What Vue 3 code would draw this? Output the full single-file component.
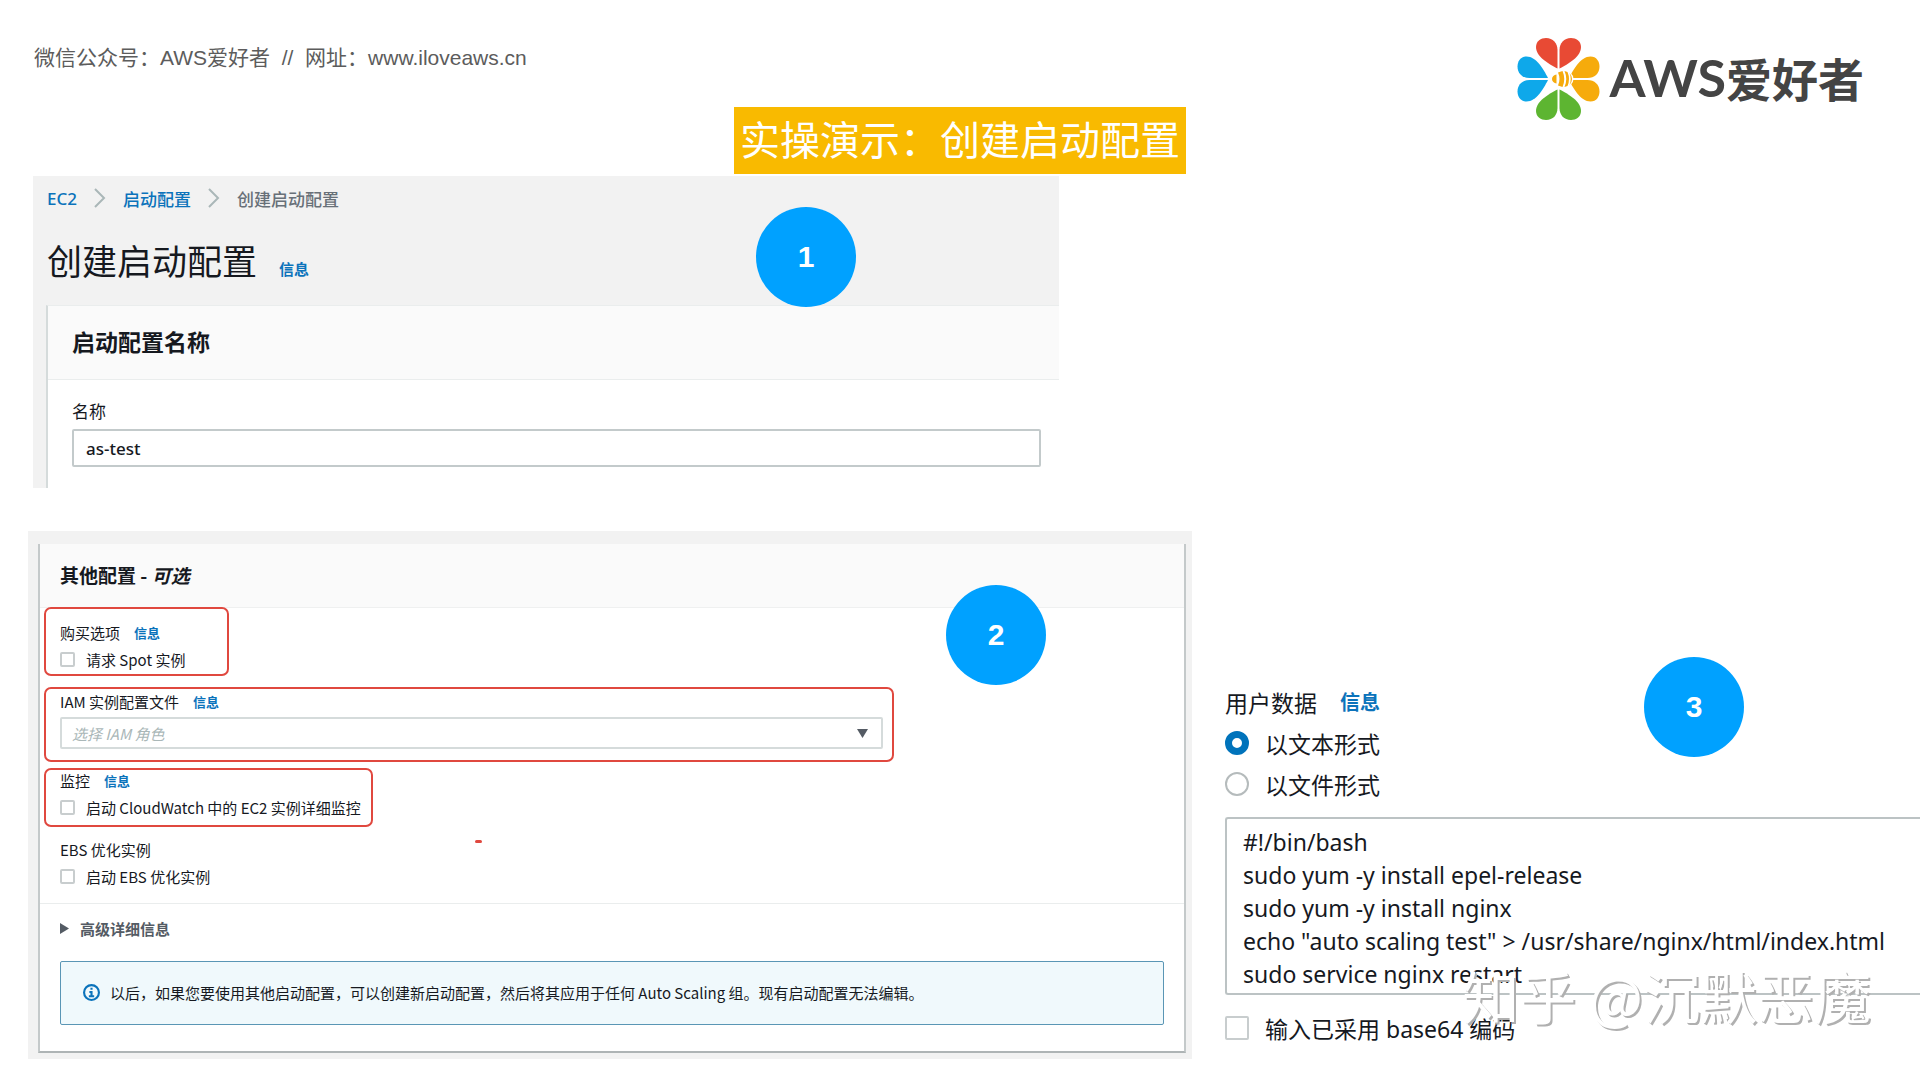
<script setup>
import { ref } from 'vue'

const name = ref('as-test')
const role = ref('')
const dataFormat = ref('text')
const base64 = ref(false)
const spot = ref(false)
const monitoring = ref(false)
const ebs = ref(false)
const script = ref(`#!/bin/bash
sudo yum -y install epel-release
sudo yum -y install nginx
echo "auto scaling test" > /usr/share/nginx/html/index.html
sudo service nginx restart`)
</script>

<template>
  <div class="slide">
    <header class="top">
      <p class="source">微信公众号：AWS爱好者&nbsp; //&nbsp; 网址：www.iloveaws.cn</p>
      <h1 class="title">实操演示：创建启动配置</h1>
      <div class="brand">
        <svg class="flower" viewBox="14 7 84 84" aria-hidden="true">
          <defs>
            <g id="petals">
              <path d="M54.5 38.5C46 34 33 27 33 17C33 11 38 8 43 8C50 8 54.5 13 54.5 20Z" />
              <path d="M56.5 38.5C65 34 78 27 78 17C78 11 73 8 68 8C61 8 56.5 13 56.5 20Z" />
            </g>
          </defs>
          <use href="#petals" fill="#e84a34" />
          <use href="#petals" fill="#f6ab0c" transform="rotate(90 55.5 49)" />
          <use href="#petals" fill="#5db531" transform="rotate(180 55.5 49)" />
          <use href="#petals" fill="#0ea8ea" transform="rotate(270 55.5 49)" />
          <ellipse cx="60.500" cy="49" rx="10" ry="9" fill="#fff" />
          <g fill="#f6ab0c">
            <path d="M53.500 44.500V53.500C51 53 49 51.500 49 49S51 45 53.500 44.500Z" />
            <path d="M55 42.500L59.500 41Q63 49 59.500 57L55 55.500Q58 49 55 42.500Z" />
            <path d="M61.500 41L64.500 42Q67.500 49 64.500 56L61.500 57Q65 49 61.500 41Z" />
            <path d="M66.500 43Q71.500 49 66.500 55Q69 49 66.500 43Z" />
          </g>
        </svg>
        <span class="wordmark"><span class="latin">AWS</span>爱好者</span>
      </div>
    </header>

    <main class="body">
      <div class="left">
        <section class="shot naming">
          <nav class="crumbs" aria-label="breadcrumb">
            <a href="#">EC2</a>
            <svg viewBox="0 0 12 20" aria-hidden="true"><path d="M1 1L10 10L1 19" /></svg>
            <a href="#">启动配置</a>
            <svg viewBox="0 0 12 20" aria-hidden="true"><path d="M1 1L10 10L1 19" /></svg>
            <span>创建启动配置</span>
          </nav>
          <div class="page-title">
            <h2>创建启动配置</h2>
            <a href="#" class="info">信息</a>
          </div>
          <div class="name-card">
            <h3>启动配置名称</h3>
            <div class="name-field">
              <label for="config-name">名称</label>
              <input id="config-name" v-model="name" type="text" />
            </div>
          </div>
          <span class="step one">1</span>
        </section>

        <section class="shot options">
          <div class="card">
            <h3>其他配置 - <em>可选</em></h3>
            <div class="groups">
              <div class="group marked purchase">
                <div class="row">购买选项 <a href="#" class="info">信息</a></div>
                <label class="row"><input v-model="spot" type="checkbox" />请求 Spot 实例</label>
              </div>
              <div class="group marked iam">
                <div class="row"><label for="iam-role">IAM 实例配置文件</label> <a href="#" class="info">信息</a></div>
                <div class="select">
                  <select id="iam-role" v-model="role">
                    <option value="">选择 IAM 角色</option>
                  </select>
                  <svg viewBox="0 0 11 9" aria-hidden="true"><path d="M0 0H11L5.500 9Z" /></svg>
                </div>
              </div>
              <div class="group marked monitor">
                <div class="row">监控 <a href="#" class="info">信息</a></div>
                <label class="row"><input v-model="monitoring" type="checkbox" />启动 CloudWatch 中的 EC2 实例详细监控</label>
              </div>
              <div class="group">
                <div class="row">EBS 优化实例</div>
                <label class="row"><input v-model="ebs" type="checkbox" />启动 EBS 优化实例</label>
              </div>
              <span class="dash"></span>
            </div>
            <div class="more">
              <button type="button" class="row advanced">
                <svg viewBox="0 0 9 11" aria-hidden="true"><path d="M0 0L9 5.500L0 11Z" /></svg>
                高级详细信息
              </button>
              <p class="notice">
                <svg viewBox="0 0 16 16" aria-hidden="true">
                  <circle cx="8" cy="8" r="7" />
                  <path d="M8 3.500V5.500M6 7.500H8V11.500M5.500 11.500H10.500" />
                </svg>
                以后，如果您要使用其他启动配置，可以创建新启动配置，然后将其应用于任何 Auto Scaling 组。现有启动配置无法编辑。
              </p>
            </div>
          </div>
          <span class="step two">2</span>
        </section>
      </div>

      <section class="userdata">
        <div class="line">用户数据 <a href="#" class="info">信息</a></div>
        <label class="line option"><input v-model="dataFormat" type="radio" name="format" value="text" />以文本形式</label>
        <label class="line option"><input v-model="dataFormat" type="radio" name="format" value="file" />以文件形式</label>
        <textarea v-model="script" rows="5" wrap="off" spellcheck="false" aria-label="用户数据"></textarea>
        <label class="line option"><input v-model="base64" type="checkbox" />输入已采用 base64 编码</label>
        <span class="step three">3</span>
        <span class="watermark">知乎 @沉默恶魔</span>
      </section>
    </main>
  </div>
</template>

<style>
body {
  margin: 0;
  background: #fff;
}
</style>

<style scoped>
.slide {
  overflow: hidden;
  padding-bottom: 20px;
  color: #16191f;
  font-family: "Noto Sans", "Noto Sans CJK SC", sans-serif;
}
.slide *,
.slide *::before {
  box-sizing: border-box;
}
h1, h2, h3, p {
  margin: 0;
}
a {
  color: #0b73bb;
  text-decoration: none;
}

/* top bar */
.top {
  display: grid;
  grid-template-columns: 1fr auto 1fr;
  height: 174px;
  padding: 0 56px 0 34px;
}
.source {
  padding-top: 43px;
  color: #5c5c5c;
  font: 21px/30px "Liberation Sans", "Noto Sans CJK SC", sans-serif;
  white-space: nowrap;
}
.title {
  align-self: end;
  height: 67px;
  margin-left: 22px;
  padding: 0 6px;
  background: #f9ba00;
  color: #fff;
  font: 400 40px/62px "Noto Sans CJK SC", sans-serif;
  white-space: nowrap;
}
.brand {
  display: flex;
  justify-content: flex-end;
  gap: 9px;
  padding-top: 37px;
}
.flower {
  width: 84px;
  height: 84px;
}
.wordmark {
  color: #444;
  font: 700 46px/80px "Noto Sans CJK SC", sans-serif;
  white-space: nowrap;
}
.latin {
  font: 700 52px/80px Lato, sans-serif;
}

/* layout */
.body {
  display: grid;
  grid-template-columns: 1192fr 728fr;
  padding-top: 2px;
}
.left {
  padding-left: 28px;
}
.shot {
  position: relative;
  background: #f2f2f2;
}
.info {
  font-weight: 700;
}
.step {
  position: absolute;
  width: 100px;
  height: 100px;
  border-radius: 50%;
  background: #00a1ff;
  color: #fff;
  font: 700 30px/100px "Liberation Sans", sans-serif;
  text-align: center;
}

/* name panel */
.naming {
  margin: 0 133px 0 5px;
  padding: 8px 0 0 14px;
}
.crumbs {
  display: flex;
  align-items: center;
  gap: 17px;
  height: 28px;
  color: #687078;
  font-size: 17px;
  font-weight: 500;
}
.crumbs svg {
  width: 12px;
  height: 20px;
  fill: none;
  stroke: #aab7b8;
  stroke-width: 2;
}
.page-title {
  display: flex;
  align-items: baseline;
  gap: 22px;
  height: 93px;
}
.page-title h2 {
  font: 400 35px/96px "Noto Sans CJK SC", sans-serif;
}
.page-title .info {
  font-size: 15px;
}
.name-card {
  border-top: 1px solid #eaeded;
  border-left: 2px solid #d5dbdb;
  margin-left: -1px;
  background: #fff;
}
.name-card h3 {
  height: 74px;
  padding-left: 24px;
  border-bottom: 1px solid #eaeded;
  background: #fafafa;
  font: 700 23px/70px "Noto Sans CJK SC", sans-serif;
}
.name-field {
  padding: 18px 18px 21px 24px;
}
.name-field label {
  display: block;
  height: 31px;
  font-size: 17px;
  line-height: 27px;
}
.name-field input {
  display: block;
  width: 100%;
  height: 38px;
  padding: 0 12px;
  border: 2px solid #c3cacb;
  border-radius: 2px;
  color: #16191f;
  font: 500 17px "Noto Sans", sans-serif;
}
.one {
  top: 31px;
  right: 203px;
}

/* options panel */
.options {
  margin-top: 43px;
  padding: 13px 6px 6px 10px;
}
.card {
  border: 1px solid #c4c9ca;
  border-width: 0 2px 2px;
  border-bottom-color: #aeb4b5;
  background: #fff;
  font: 400 15px "Noto Sans CJK SC", sans-serif;
}
.card h3 {
  height: 64px;
  padding-left: 20px;
  border-bottom: 1px solid #eff0f0;
  background: #fafafa;
  font: 700 19px/62px "Noto Sans CJK SC", sans-serif;
}
.groups {
  position: relative;
  display: flex;
  flex-direction: column;
  gap: 15px;
  padding: 11px 20px 13px;
  border-bottom: 1px solid #eaeded;
}
.row {
  display: flex;
  align-items: center;
  height: 27px;
  white-space: nowrap;
}
.row .info {
  margin-left: 14px;
  font-size: 13px;
}
.group {
  position: relative;
}
input[type="checkbox"],
input[type="radio"] {
  appearance: none;
  flex: none;
  width: 15px;
  height: 15px;
  margin: 0 11px 0 0;
  border: 2px solid #c8cdce;
  border-radius: 2px;
  background: #fff;
}
/* red annotation outline drawn over a group */
.marked::before {
  content: "";
  position: absolute;
  inset: -1px auto -3px -16px;
  border: 2px solid #e0483f;
  border-radius: 7px;
  pointer-events: none;
}
.purchase::before {
  top: -12px;
  width: 185px;
}
.iam {
  padding-bottom: 3px;
}
.iam::before {
  bottom: -10px;
  width: 850px;
}
.monitor::before {
  top: 1px;
  bottom: -6px;
  width: 329px;
}
.select {
  position: relative;
  width: 823px;
  max-width: 100%;
  margin-top: 2px;
}
.select select {
  display: block;
  appearance: none;
  width: 100%;
  height: 32px;
  padding: 0 10px;
  border: 2px solid #d5dbdb;
  border-radius: 2px;
  background: #fff;
  color: #aab7b8;
  font: italic 15px "Noto Sans CJK SC", sans-serif;
}
.select svg {
  position: absolute;
  top: 12px;
  right: 15px;
  width: 11px;
  height: 9px;
  fill: #545b64;
}
.dash {
  position: absolute;
  left: 435px;
  bottom: 60px;
  width: 7px;
  height: 3px;
  border-radius: 2px;
  background: #e0483f;
}
.more {
  padding: 11px 20px 26px;
}
.advanced {
  gap: 11px;
  padding: 0;
  border: 0;
  background: none;
  color: #545b64;
  font: 700 15px "Noto Sans CJK SC", sans-serif;
}
.advanced svg {
  width: 9px;
  height: 11px;
  fill: #545b64;
}
.notice {
  display: flex;
  align-items: center;
  gap: 10px;
  height: 64px;
  margin-top: 19px;
  padding: 0 0 2px 22px;
  border: 1px solid #5a96b5;
  border-radius: 2px;
  background: #f0f9fc;
  white-space: nowrap;
}
.notice svg {
  flex: none;
  width: 17px;
  height: 17px;
  fill: none;
  stroke: #0b73bb;
  stroke-width: 2;
}
.two {
  top: 54px;
  right: 146px;
}

/* user data panel */
.userdata {
  position: relative;
  padding: 506px 0 0 33px;
  font-size: 23px;
}
.line {
  display: flex;
  align-items: center;
  height: 41px;
  padding-bottom: 2px;
  white-space: nowrap;
}
.line .info {
  margin-left: 23px;
  font-size: 20px;
}
.userdata input {
  width: 24px;
  height: 24px;
  margin-right: 16px;
}
.userdata input[type="radio"] {
  border-color: #b5bbbc;
  border-radius: 50%;
}
.userdata input[type="radio"]:checked {
  border: 7px solid #0073bb;
}
.userdata textarea {
  display: block;
  width: 100%;
  height: 178px;
  margin: 12px 0 13px;
  padding: 7px 16px;
  overflow: hidden;
  resize: none;
  border: 2px solid #bcc3c4;
  border-right: 0;
  border-radius: 3px 0 0 3px;
  color: #16191f;
  font: 23px/33px "Noto Sans", sans-serif;
}
.three {
  top: 481px;
  right: 176px;
}
.watermark {
  position: absolute;
  right: 49px;
  bottom: 33px;
  color: #fff;
  font: 400 57px/64px "Noto Sans CJK SC", sans-serif;
  text-shadow: 2px 2px 0 #b0b0b0;
  white-space: nowrap;
}
</style>
